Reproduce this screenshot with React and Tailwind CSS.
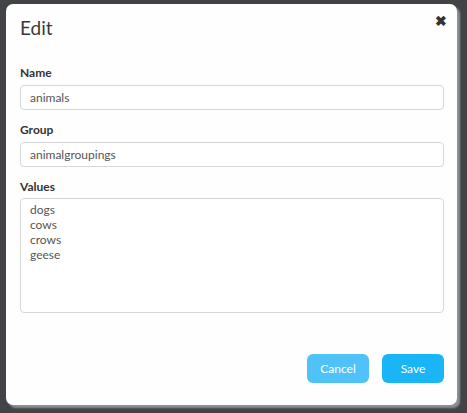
const Field = ({ label, children }) => (
  <div className="flex flex-col">
    <label className="text-[12px] font-bold leading-[14px] text-[#333]">{label}</label>
    <div className="mt-[4px]">{children}</div>
  </div>
);

const App = () => {
  const values = ["dogs", "cows", "crows", "geese"];

  return (
    <div
      className="h-[413px] w-[467px] overflow-hidden bg-[#414347] pl-[6px] pt-[4px]"
      style={{ fontFamily: "Lato, 'Open Sans', sans-serif" }}
    >
      <div className="flex h-[401px] w-[451px] flex-col rounded-[7px] bg-[#fefefe] px-[14px] shadow-[3px_3px_2px_#8d9095]">
        <div className="flex items-start justify-between pt-[11px]">
          <h1 className="text-[19px] font-normal leading-[26px] text-[#3a3a3a]">Edit</h1>
          <button className="mr-[-4px] mt-[-1px] text-[14px] font-black leading-none text-[#333]">✖</button>
        </div>

        <div className="mt-[25px] flex flex-col gap-[13px]">
          <Field label="Name">
            <input
              defaultValue="animals"
              className="h-[25px] w-[424px] rounded-[4px] border border-[#d6d6d6] bg-white px-[9px] text-[12px] text-[#555] outline-none"
            />
          </Field>
          <Field label="Group">
            <input
              defaultValue="animalgroupings"
              className="h-[25px] w-[424px] rounded-[4px] border border-[#d6d6d6] bg-white px-[9px] text-[12px] text-[#555] outline-none"
            />
          </Field>
          <Field label="Values">
            <div className="h-[115px] w-[424px] rounded-[4px] border border-[#d6d6d6] bg-white px-[9px] pt-[3px] text-[12px] leading-[15px] text-[#555]">
              {values.map((v) => (
                <div key={v}>{v}</div>
              ))}
            </div>
          </Field>
        </div>

        <div className="mt-[41px] flex w-[424px] justify-end gap-[13px]">
          <button className="h-[29px] w-[62px] rounded-[6px] bg-[#4fc3f7] text-[12px] text-white">Cancel</button>
          <button className="h-[29px] w-[62px] rounded-[6px] bg-[#1ab5f7] text-[12px] text-white">Save</button>
        </div>
      </div>
    </div>
  );
};

export default App;
